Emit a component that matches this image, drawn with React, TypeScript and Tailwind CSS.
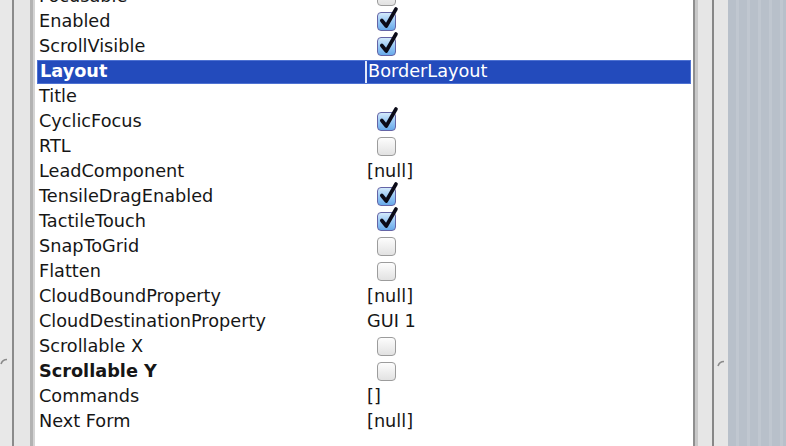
import React from "react";

type Row = { name: string; kind: "check" | "text" | "none"; checked?: boolean; value?: string; bold?: boolean };

const rows: Row[] = [
  { name: "Focusable", kind: "check", checked: false },
  { name: "Enabled", kind: "check", checked: true },
  { name: "ScrollVisible", kind: "check", checked: true },
  { name: "Layout", kind: "text", value: "BorderLayout" },
  { name: "Title", kind: "none" },
  { name: "CyclicFocus", kind: "check", checked: true },
  { name: "RTL", kind: "check", checked: false },
  { name: "LeadComponent", kind: "text", value: "[null]" },
  { name: "TensileDragEnabled", kind: "check", checked: true },
  { name: "TactileTouch", kind: "check", checked: true },
  { name: "SnapToGrid", kind: "check", checked: false },
  { name: "Flatten", kind: "check", checked: false },
  { name: "CloudBoundProperty", kind: "text", value: "[null]" },
  { name: "CloudDestinationProperty", kind: "text", value: "GUI 1" },
  { name: "Scrollable X", kind: "check", checked: false },
  { name: "Scrollable Y", kind: "check", checked: false, bold: true },
  { name: "Commands", kind: "text", value: "[]" },
  { name: "Next Form", kind: "text", value: "[null]" },
];

// aqua-ish checkbox
function Check({ on }: { on?: boolean }) {
  return (
    <div className="relative ml-[10px] h-[19px] w-[19px]">
      <div
        className={
          on
            ? "h-full w-full rounded-[4px] border border-[#6464a6] bg-gradient-to-b from-[#d4eafc] via-[#98c8f4] to-[#68aaea]"
            : "h-full w-full rounded-[4px] border border-[#9c9c9c] bg-gradient-to-b from-[#fdfdfd] to-[#e2e2e2]"
        }
      />
      {on && (
        <svg className="absolute left-[1px] top-[-6px]" width="21" height="24" viewBox="0 0 21 24">
          <path d="M3.8 14.5 L8.3 20 L18 3" fill="none" stroke="#0b0b18" strokeWidth="3.6" strokeLinecap="round" strokeLinejoin="round" />
        </svg>
      )}
    </div>
  );
}

function Nub() {
  return (
    <svg width="8" height="7" viewBox="0 0 8 7">
      <path d="M1 6 Q2.5 1.5 7 1.5" fill="none" stroke="#8a8a8a" strokeWidth="1.6" />
    </svg>
  );
}

export default function App() {
  return (
    <div className="flex h-[446px] w-[786px] overflow-hidden bg-white text-[17.7px] text-[#161616] [font-family:'DejaVu_Sans',sans-serif]">
      {/* left split-pane gutter */}
      <div className="flex w-[12px] shrink-0 items-start bg-[#e8e8e8] pt-[358px]">
        <Nub />
      </div>
      <div className="w-[2px] shrink-0 bg-[#8b8b8b]" />
      <div className="w-[16px] shrink-0 bg-[#e6e6e6]" />
      <div className="w-[3px] shrink-0 bg-[#b2b2b2]" />
      <div className="w-[2px] shrink-0 bg-[#d4d4d4]" />

      {/* property table */}
      <div className="w-[658px] shrink-0 overflow-hidden px-[2px]">
        <div className="-mt-[16px]">
          {rows.map((r) => {
            const sel = r.name === "Layout";
            return (
              <div key={r.name} className="flex h-[25px] items-center">
                <div
                  className={
                    sel
                      ? "flex h-[24px] w-full items-center border border-[#4e72d2] bg-[#234bbc] text-white"
                      : "flex h-[24px] w-full items-center"
                  }
                >
                  <div className={`w-[327px] shrink-0 whitespace-nowrap pl-[2px] leading-none ${sel || r.bold ? "font-bold" : ""}`}>
                    {r.name}
                  </div>
                  <div className={`h-full w-[2px] shrink-0 ${sel ? "bg-[#e4eaf8]" : ""}`} />
                  <div className="flex flex-1 items-center whitespace-nowrap pl-[1px] leading-none">
                    {r.kind === "check" && <Check on={r.checked} />}
                    {r.kind === "text" && <span>{r.value}</span>}
                  </div>
                </div>
              </div>
            );
          })}
        </div>
      </div>

      {/* right split-pane gutter */}
      <div className="w-[2px] shrink-0 bg-[#8f8f8f]" />
      <div className="w-[3px] shrink-0 bg-[#c8c8c8]" />
      <div className="w-[14px] shrink-0 bg-[#e6e6e6]" />
      <div className="w-[2px] shrink-0 bg-[#878787]" />
      <div className="flex w-[14px] shrink-0 items-start bg-[#e6e6e6] pl-[3px] pt-[360px]">
        <Nub />
      </div>
      <div className="flex-1 bg-[repeating-linear-gradient(90deg,#b8c0ca_0px,#b8c0ca_8px,#c0c7d0_8px,#c0c7d0_11px)]" />
    </div>
  );
}
